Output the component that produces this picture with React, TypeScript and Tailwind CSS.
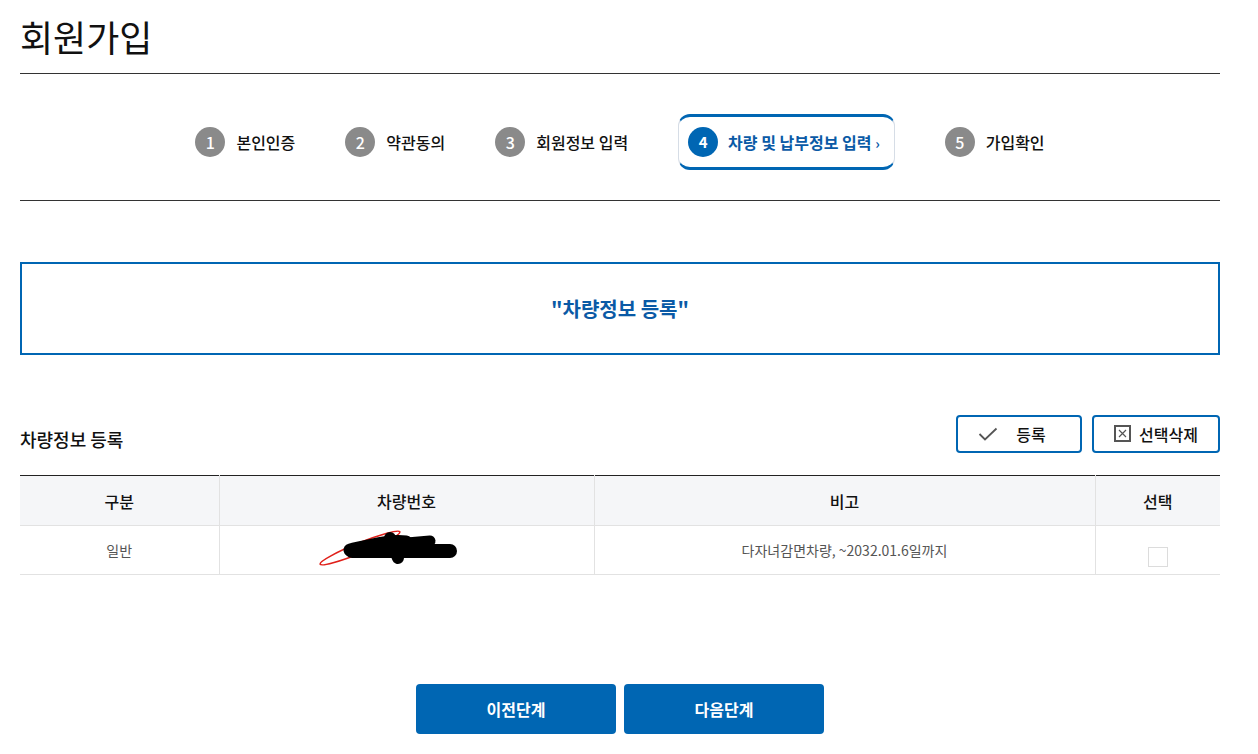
import React from 'react';

const font = { fontFamily: '"Noto Sans CJK KR", "Noto Sans", sans-serif' };

const steps = [
  { no: 1, label: '본인인증' },
  { no: 2, label: '약관동의' },
  { no: 3, label: '회원정보 입력' },
  { no: 4, label: '차량 및 납부정보 입력', active: true },
  { no: 5, label: '가입확인' },
];

const Redaction = () => (
  <svg width="190" height="40" viewBox="0 0 190 40" className="block">
    <ellipse cx="48" cy="18" rx="43" ry="5" transform="rotate(-22 48 18)" fill="none" stroke="#e0201a" strokeWidth="1.6" />
    <path d="M38 20 C 60 15, 78 10, 94 12" stroke="#000" strokeWidth="13" strokeLinecap="round" fill="none" />
    <path d="M40 21 L 138 21" stroke="#000" strokeWidth="14" strokeLinecap="round" fill="none" />
    <path d="M78 8 L 86 28" stroke="#000" strokeWidth="12" strokeLinecap="round" fill="none" />
    <path d="M95 13 L 118 11" stroke="#000" strokeWidth="11" strokeLinecap="round" fill="none" />
  </svg>
);

const App: React.FC = () => {
  return (
    <div className="min-h-screen bg-white text-[#111]" style={font}>
      <div className="mx-[20px] w-[1200px]">
        <div className="h-[74px] border-b border-[#333] pt-[11px]">
          <h1 className="text-[36px] leading-[50px] font-normal">회원가입</h1>
        </div>

        <div className="h-[127px] border-b border-[#333] pt-[40px]">
          <ul className="flex items-center justify-center gap-[50px]">
            {steps.map(step =>
              step.active ? (
                <li
                  key={step.no}
                  className="flex h-[56px] items-center gap-[10px] rounded-[12px] border-x border-y-[3px] border-x-[#d6dde6] border-y-[#0066b3] pl-[9px] pr-[14px]"
                >
                  <span className="flex h-[30px] w-[30px] items-center justify-center rounded-full bg-[#0066b3] text-[15px] font-bold text-white">
                    {step.no}
                  </span>
                  <span className="text-[16px] font-bold text-[#0a5aa6]">
                    {step.label} <span className="text-[14px]">›</span>
                  </span>
                </li>
              ) : (
                <li key={step.no} className="flex items-center gap-[11px]">
                  <span className="flex h-[30px] w-[30px] items-center justify-center rounded-full bg-[#8a8a8a] text-[16px] font-medium text-white">
                    {step.no}
                  </span>
                  <span className="text-[16px] font-medium">{step.label}</span>
                </li>
              )
            )}
          </ul>
        </div>

        <div className="mt-[61px] flex h-[93px] items-center justify-center border-2 border-[#0066b3]">
          <p className="text-[20px] font-bold text-[#0a5aa6]">"차량정보 등록"</p>
        </div>

        <div className="mt-[59px] flex items-center justify-between">
          <h2 className="mt-[12px] text-[18px] font-medium">차량정보 등록</h2>
          <div className="flex gap-[10px]">
            <button className="flex h-[38px] w-[126px] items-center justify-center gap-[18px] rounded-[4px] border-2 border-[#0066b3] bg-white pr-[14px] text-[16px] font-medium">
              <svg width="20" height="14" viewBox="0 0 20 14" fill="none">
                <path d="M1.5 7 L7 12.5 L18.5 1.5" stroke="#555" strokeWidth="1.8" />
              </svg>
              등록
            </button>
            <button className="flex h-[38px] w-[128px] items-center justify-center gap-[8px] rounded-[4px] border-2 border-[#0066b3] bg-white text-[16px] font-medium">
              <svg width="17" height="17" viewBox="0 0 17 17" fill="none">
                <rect x="1" y="1" width="15" height="15" stroke="#555" strokeWidth="2" />
                <path d="M5 5 L12 12 M12 5 L5 12" stroke="#555" strokeWidth="1.2" />
              </svg>
              선택삭제
            </button>
          </div>
        </div>

        <table className="mt-[22px] w-full border-collapse border-t border-t-[#222] text-center">
          <thead>
            <tr className="h-[50px] bg-[#f5f6f8] text-[16px]">
              <th className="w-[199px] border-b border-r border-[#e2e2e2] font-medium">구분</th>
              <th className="w-[375px] border-b border-r border-[#e2e2e2] font-medium">차량번호</th>
              <th className="w-[501px] border-b border-r border-[#e2e2e2] font-medium">비고</th>
              <th className="border-b border-[#e2e2e2] font-medium">선택</th>
            </tr>
          </thead>
          <tbody>
            <tr className="h-[49px] text-[14px] text-[#555]">
              <td className="border-b border-r border-[#e2e2e2]">일반</td>
              <td className="border-b border-r border-[#e2e2e2]">
                <div className="flex justify-center">
                  <Redaction />
                </div>
              </td>
              <td className="border-b border-r border-[#e2e2e2]">다자녀감면차량, ~2032.01.6일까지</td>
              <td className="border-b border-[#e2e2e2]">
                <div className="flex justify-center pt-[14px]">
                  <span className="block h-[20px] w-[20px] border border-[#dcdcdc] bg-white" />
                </div>
              </td>
            </tr>
          </tbody>
        </table>

        <div className="mt-[109px] flex justify-center gap-[8px]">
          <button className="h-[50px] w-[200px] rounded-[4px] bg-[#0066b3] text-[16px] font-bold text-white">이전단계</button>
          <button className="h-[50px] w-[200px] rounded-[4px] bg-[#0066b3] text-[16px] font-bold text-white">다음단계</button>
        </div>
      </div>
    </div>
  );
};

export default App;
